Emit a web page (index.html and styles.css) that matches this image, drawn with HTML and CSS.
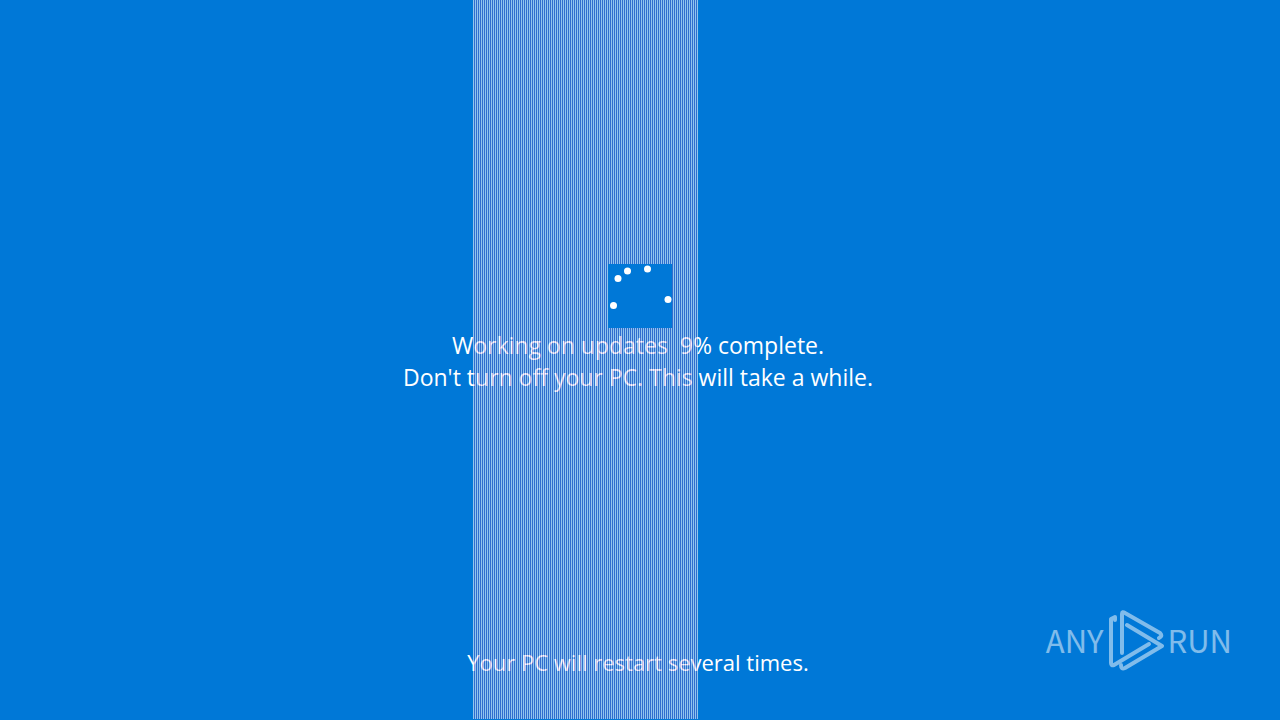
FILE: index.html
```
<!DOCTYPE html>
<html lang="en">
<head>
<meta charset="utf-8">
<meta name="viewport" content="width=device-width, initial-scale=1.0">
<title>Working on updates</title>
<link rel="stylesheet" href="styles.css">
</head>
<body>
<main class="screen">
  <svg class="spinner" viewBox="0 0 64 64" width="64" height="64" role="img" aria-label="Loading">
    <circle cx="5.5" cy="41.5" r="3.5"/>
    <circle cx="10" cy="14.5" r="3.5"/>
    <circle cx="19.5" cy="7" r="3.5"/>
    <circle cx="39.5" cy="5" r="3.5"/>
    <circle cx="60" cy="35.5" r="3.5"/>
  </svg>
  <p class="status">Working on updates&nbsp; 9% complete.<br>Don't turn off your PC. This will take a while.</p>
  <p class="note">Your PC will restart several times.</p>
</main>
<div class="stripes"></div>
<div class="watermark">
  <span>ANY</span>
  <svg viewBox="0 0 58 64" width="58" height="64" aria-hidden="true">
    <path d="M8 12 V9 L4 11 V55 Q4 58 7 57 L42 36"/>
    <path d="M15 45 V6 Q15 3 18 5 L53 25 Q56 28 52 30"/>
    <path d="M20 17 L55 38 L18 60 Q14 62 14 57"/>
  </svg>
  <span>RUN</span>
</div>
</body>
</html>
```

FILE: styles.css
```
body {
  margin: 0;
  background: #0078d7;
  color: #fff;
  font-family: "Open Sans", "Noto Sans", sans-serif;
}
.screen {
  display: flex;
  flex-direction: column;
  align-items: center;
  box-sizing: border-box;
  min-height: 100vh;
  padding: 264px 0 42px;
}
/* the lines run over the text but under the spinner */
.stripes {
  position: absolute;
  top: 0;
  bottom: 1px;
  left: 473px;
  width: 225px;
  background: repeating-linear-gradient(to right, rgba(255,255,255,0.57) 0 1px, rgba(120,93,193,0.4) 1px 2px);
}
.spinner {
  position: relative;
  z-index: 1;
  background: #0078d7;
  fill: #fff;
}
.status, .note {
  margin: 0;
  padding-right: 4px;
  font-size: 23px;
  line-height: 32px;
  text-align: center;
}
.status {
  margin-top: 1px;
}
.note {
  margin-top: auto;
  font-size: 22px;
}
.watermark {
  position: absolute;
  right: 48px;
  bottom: 48px;
  display: flex;
  align-items: center;
  gap: 3px;
  opacity: 0.5;
  font-family: "Noto Sans CJK JP", sans-serif;
  font-size: 31px;
  line-height: 64px;
}
.watermark svg {
  fill: none;
  stroke: #fff;
  stroke-width: 4;
  stroke-linejoin: round;
  stroke-linecap: round;
}
```
